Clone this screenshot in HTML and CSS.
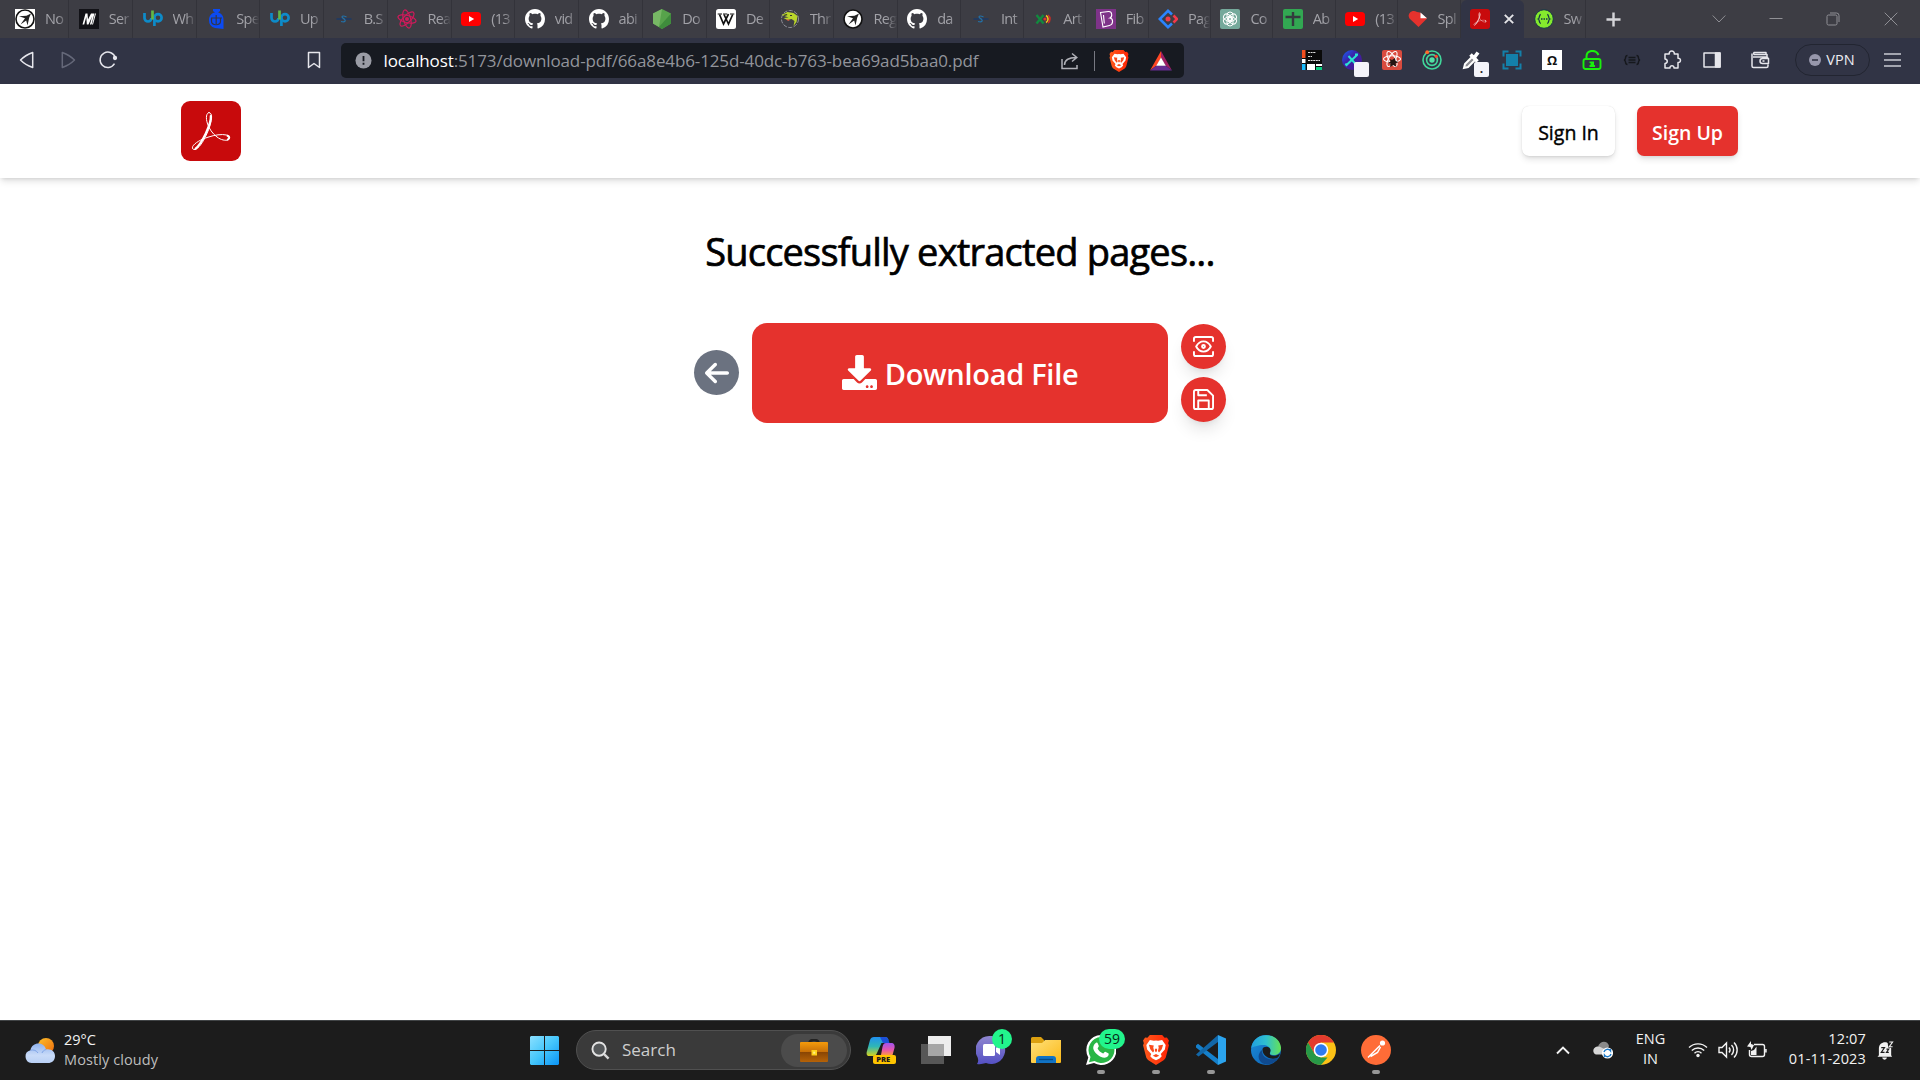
FILE: index.html
```
<!DOCTYPE html>
<html lang="en">
<head>
<meta charset="utf-8">
<title>Download File</title>
<link rel="stylesheet" href="styles.css">
</head>
<body>
<svg class="sprite" aria-hidden="true">
  <defs>
    <linearGradient id="g-win" x1="0" y1="0" x2="1" y2="1"><stop offset="0" stop-color="#8be0ff"/><stop offset=".5" stop-color="#45c6fb"/><stop offset="1" stop-color="#0a93f5"/></linearGradient>
    <linearGradient id="g-sun" x1="0" y1="0" x2="1" y2="1"><stop offset="0" stop-color="#fcc02a"/><stop offset="1" stop-color="#ee6a0c"/></linearGradient>
    <linearGradient id="g-cloud" x1="0" y1="0" x2="0" y2="1"><stop offset="0" stop-color="#8fb2ee"/><stop offset=".6" stop-color="#c9dbf8"/><stop offset="1" stop-color="#b9d0f5"/></linearGradient>
    <linearGradient id="g-case" x1="0" y1="0" x2="0" y2="1"><stop offset="0" stop-color="#f59b0b"/><stop offset=".5" stop-color="#c87008"/><stop offset=".52" stop-color="#8a4604"/><stop offset="1" stop-color="#b56207"/></linearGradient>
    <linearGradient id="g-cop1" x1="0" y1="0" x2="0" y2="1"><stop offset="0" stop-color="#2090f0"/><stop offset=".5" stop-color="#2fb7b5"/><stop offset="1" stop-color="#d7d31b"/></linearGradient>
    <linearGradient id="g-cop2" x1="0" y1="0" x2="0" y2="1"><stop offset="0" stop-color="#a052f0"/><stop offset=".6" stop-color="#e957a8"/><stop offset="1" stop-color="#fb9648"/></linearGradient>
    <linearGradient id="g-chat" x1="0" y1="0" x2="0" y2="1"><stop offset="0" stop-color="#8f86cf"/><stop offset="1" stop-color="#5450c4"/></linearGradient>
    <linearGradient id="g-folder" x1="0" y1="0" x2="1" y2="1"><stop offset="0" stop-color="#ffe07a"/><stop offset="1" stop-color="#fbb917"/></linearGradient>
    <linearGradient id="g-brave" x1="0" y1="0" x2="1" y2="0"><stop offset="0" stop-color="#ff5a1c"/><stop offset="1" stop-color="#ff2405"/></linearGradient>
    <linearGradient id="g-edge" x1="0" y1="0" x2="1" y2="0"><stop offset="0" stop-color="#219fe0"/><stop offset=".5" stop-color="#2fc0cf"/><stop offset="1" stop-color="#65e255"/></linearGradient>
    <linearGradient id="g-edge2" x1="0" y1="0" x2="1" y2="1"><stop offset="0" stop-color="#1c8fdc"/><stop offset="1" stop-color="#0b5bad"/></linearGradient>
    <linearGradient id="g-x" x1="0" y1="0" x2="1" y2="1"><stop offset="0" stop-color="#1668ff"/><stop offset=".4" stop-color="#3a22a8"/><stop offset="1" stop-color="#4b178f"/></linearGradient>
  </defs>
  <symbol id="adobe" viewBox="0 0 60 60">
    <rect width="60" height="60" rx="9" fill="#c80a0c"/>
    <g fill="none" stroke="#fff" stroke-linecap="round" stroke-linejoin="round">
      <path stroke-width="1" d="M28 11.6c-2.6 0-3.6 5.200-1.400 11.400 1.600 4.600 4.600 9.400 9.400 13 4 3 8.500 3.900 11 2.900 2.400-1 2.200-4.100-1.500-4.900-5-1.100-11.500-.1-18.500 2.200-7 2.200-13.500 5.800-15.300 9.300-.9 2 .4 3.400 2.300 3 3.500-.8 8-7.200 11.300-14.500 3.500-7.500 5.200-13.500 5.300-18 0-2.700-1-4.400-2.600-4.400z"/>
      <path stroke-width="2.200" d="M29.800 15c.4 4-2.300 11.600-5 17.400-3 6.200-6.400 12.300-10.200 15.200"/>
      <path stroke-width="2" d="M46.500 34.800c2.200.9 2.200 2.600.4 3.600"/>
    </g>
  </symbol>
  <symbol id="github" viewBox="0 0 16 16"><path fill="#fff" d="M8 0C3.580 0 0 3.580 0 8c0 3.540 2.290 6.530 5.470 7.590.4.070.55-.17.55-.38 0-.19-.01-.82-.01-1.490-2.010.37-2.530-.49-2.690-.94-.09-.23-.48-.94-.82-1.130-.28-.15-.68-.52-.01-.53.630-.01 1.080.58 1.230.82.720 1.210 1.870.87 2.330.66.070-.52.280-.87.510-1.070-1.780-.2-3.640-.89-3.640-3.950 0-.87.310-1.590.82-2.150-.08-.2-.36-1.020.08-2.120 0 0 .67-.21 2.200.82.640-.18 1.320-.27 2-.27s1.360.09 2 .27c1.530-1.040 2.200-.82 2.200-.82.440 1.100.160 1.920.080 2.120.510.560.820 1.270.820 2.150 0 3.070-1.870 3.750-3.650 3.950.290.250.540.730.540 1.480 0 1.070-.01 1.930-.01 2.200 0 .21.150.46.550.38A8.010 8.010 0 0 0 16 8c0-4.420-3.580-8-8-8z"/></symbol>
  <symbol id="youtube" viewBox="0 0 20 20"><rect y="3" width="20" height="14" rx="3.500" fill="#f00"/><path fill="#fff" d="M8 7l5.200 3L8 13z"/></symbol>
  <symbol id="upwork" viewBox="0 0 20 20"><g fill="none" stroke-width="2.700"><path stroke="#0d8bc9" d="M1.500 4v5a3.500 3.500 0 0 0 7 0"/><circle cx="15" cy="8.800" r="3.600" stroke="#0d8bc9"/><path stroke="#0d8bc9" d="M11.400 10v7"/><path stroke="#63b846" d="M9.500 1.500v9"/></g></symbol>
  <symbol id="wing" viewBox="0 0 20 20"><circle cx="10" cy="10" r="9" fill="#fff" stroke="#111" stroke-width="1.600"/><path fill="#222" d="M4 7.200l7.500-.4L16 4.500l-1.800 4.200-1.700 7.800-1.300-5-5.700 4 4.500-6.300z"/></symbol>
  <symbol id="dna" viewBox="0 0 20 20"><path d="M2.500 10h6M11 10h6.500" stroke="#233a5e" stroke-width="1.800"/><path d="M12.500 8c-4-2-6-.5-3 1.500s2 4-2.500 3" fill="none" stroke="#2371a8" stroke-width="1.200"/></symbol>
  <symbol id="brave" viewBox="0 0 20 22"><path fill="url(#g-brave)" d="M5.500 0h9l1.800 2 1.700-.2L19.500 4l-.6 2 .6 1.500-2.200 8.500c-.3 1.200-1 2-2 2.700L10 22l-5.300-3.300c-1-.7-1.700-1.500-2-2.700L.5 7.500 1.100 6 .5 4 2 1.800l1.700.2z"/><path fill="#fff" d="M5.500 3.700l3 .6L10 4l1.500.3 3-.6 2.600 3.600-.6 3.300-3 3.400.7 1.500-1.600 1.800L10 18.500l-2.600-1.200-1.600-1.800.7-1.500-3-3.400-.6-3.300z"/><path fill="#fb4a1b" d="M4.800 7.200l3.600.5-.4 1.400.6 2.700-.8 1-2-2.300zM15.200 7.200l-3.600.5.4 1.400-.6 2.700.8 1 2-2.300zM7.600 15.200L10 14l2.400 1.200L10 16.300zM9.200 10h1.600v1.800L10 12.600l-.8-.8z"/></symbol>
</svg>

<div class="screen">
  <div class="tabs">
    <div class="tab"><svg class="fav" viewBox="0 0 20 20"><path fill="#fff" d="M0 0h20v20H0z"/><use href="#wing"/></svg><span class="label">No</span></div>
    <div class="tab"><svg class="fav" viewBox="0 0 20 20"><path fill="#121217" d="M0 0h20v20H0z"/><path fill="#fff" d="M3.500 15.500l3-11h2l.5 6 3-6h3.500l-3 11h-1.600l2.200-8-3.600 8H7.800L7.300 8l-2.100 7.500z"/><path fill="#fff" d="M16 4.500h1l-3 11h-1z"/></svg><span class="label">Ser</span></div>
    <div class="tab"><svg class="fav"><use href="#upwork"/></svg><span class="label">Wh</span></div>
    <div class="tab"><svg class="fav" viewBox="0 0 20 20"><path fill="#0b4af2" d="M7 0h7v2l-2 1.500c3 .5 5.500 3 5.500 7V20L9 19a8 8 0 0 1-6-8c0-4 2.500-7 6-7.500L7 2z"/><path d="M5 9h11M5.500 9v3c0 5 9 5 9 0V9M10.200 6v9" fill="none" stroke="#32364a" stroke-width="1.200"/></svg><span class="label">Spe</span></div>
    <div class="tab"><svg class="fav"><use href="#upwork"/></svg><span class="label">Up</span></div>
    <div class="tab"><svg class="fav"><use href="#dna"/></svg><span class="label">B.S</span></div>
    <div class="tab"><svg class="fav" viewBox="0 0 20 20"><g fill="none" stroke="#d11a5b" stroke-width="1.200"><ellipse cx="10" cy="10" rx="9.300" ry="3.600" transform="rotate(15 10 10)"/><ellipse cx="10" cy="10" rx="9.300" ry="3.600" transform="rotate(75 10 10)"/><ellipse cx="10" cy="10" rx="9.300" ry="3.600" transform="rotate(135 10 10)"/></g><circle cx="10" cy="10" r="2" fill="#d11a5b"/></svg><span class="label">Rea</span></div>
    <div class="tab"><svg class="fav"><use href="#youtube"/></svg><span class="label">(13</span></div>
    <div class="tab"><svg class="fav"><use href="#github"/></svg><span class="label">vid</span></div>
    <div class="tab"><svg class="fav"><use href="#github"/></svg><span class="label">abi</span></div>
    <div class="tab"><svg class="fav" viewBox="0 0 20 20"><path fill="#57a34b" d="M10 0l9 4.500v10L10 20l-9-5.500v-10z"/><path fill="#77b865" d="M10 0L1 4.500v10L7 18z"/><path fill="#3f8c3c" d="M19 4.500L7 18l3 2 9-5.500z"/></svg><span class="label">Do</span></div>
    <div class="tab"><svg class="fav" viewBox="0 0 20 20"><rect width="20" height="20" rx="2.500" fill="#fff"/><path fill="none" stroke="#111" stroke-width="1.700" d="M3.500 5.500l4 9.500 5-10M8 5.500l4.500 9.500 4.200-9.500"/><path stroke="#111" d="M1.700 5H6M7 5h4M14 5h4.300"/></svg><span class="label">De</span></div>
    <div class="tab"><svg class="fav" viewBox="0 0 20 20"><circle cx="10" cy="10" r="8.500" fill="none" stroke="#909099" stroke-width="1" stroke-dasharray="4 1.500"/><path fill="#b9d42b" d="M1.500 6l6-3 6 1 4 3-1 6-3 4 1-5-3-2-4 1-4-2 5-.500z"/><path fill="#333" d="M3.500 6l3-1 1 1-3 1zM10 6h2v1h-2z"/><path fill="#e65b3d" d="M6 10l4 1-2 1z"/></svg><span class="label">Thr</span></div>
    <div class="tab"><svg class="fav"><use href="#wing"/></svg><span class="label">Reg</span></div>
    <div class="tab"><svg class="fav"><use href="#github"/></svg><span class="label">da</span></div>
    <div class="tab late"><svg class="fav"><use href="#dna"/></svg><span class="label">Int</span></div>
    <div class="tab late"><svg class="fav" viewBox="0 0 20 20"><path d="M3.500 6l7 8.500M10.500 6l-7 8.500" stroke="#128a3e" stroke-width="2.400"/><circle cx="12" cy="10" r="1.600" fill="#e3322c"/><path d="M13 6.500a4 4 0 0 1 0 7" fill="none" stroke="#f0c21d" stroke-width="1.600"/><path d="M15 6a5 5 0 0 1 0 8" fill="none" stroke="#d42a24" stroke-width="1.500"/></svg><span class="label">Art</span></div>
    <div class="tab late"><svg class="fav" viewBox="0 0 20 20"><path fill="#7e3389" d="M0 0h20v20H0z"/><path d="M4.500 3.500l8-1c4-.3 4 5.500 1.500 6.500 3.500.5 3.500 6.500-.5 7.500l-6.500 1.500zM7.500 6l.8 8.500" fill="none" stroke="#fff" stroke-width="1.100"/></svg><span class="label">Fib</span></div>
    <div class="tab late"><svg class="fav" viewBox="0 0 20 20"><g fill="none" stroke-width="2.600"><path stroke="#2a84ff" d="M14 5.500L10 1.800 1.800 10l8.200 8.200 4-3.700"/><path stroke="#f3394b" d="M15.500 6.500L19 10l-3.500 3.500"/></g><circle cx="10" cy="10" r="2.500" fill="#f3394b"/></svg><span class="label">Pag</span></div>
    <div class="tab late"><svg class="fav" viewBox="0 0 20 20"><rect width="20" height="20" rx="2" fill="#75a99b"/><g fill="none" stroke="#fff" stroke-width="1"><rect x="7" y="3" width="6" height="8.500" rx="3"/><rect x="7" y="3" width="6" height="8.500" rx="3" transform="rotate(60 10 10)"/><rect x="7" y="3" width="6" height="8.500" rx="3" transform="rotate(120 10 10)"/><rect x="7" y="3" width="6" height="8.500" rx="3" transform="rotate(180 10 10)"/><rect x="7" y="3" width="6" height="8.500" rx="3" transform="rotate(240 10 10)"/><rect x="7" y="3" width="6" height="8.500" rx="3" transform="rotate(300 10 10)"/></g></svg><span class="label">Co</span></div>
    <div class="tab late"><svg class="fav" viewBox="0 0 20 20"><rect width="20" height="20" rx="2" fill="#32a852"/><path d="M2.500 8h15M10 3v14" stroke="#343b3e" stroke-width="2.400"/></svg><span class="label">Ab</span></div>
    <div class="tab late"><svg class="fav"><use href="#youtube"/></svg><span class="label">(13</span></div>
    <div class="tab late"><svg class="fav" viewBox="0 0 20 20"><path fill="#e5322d" d="M10.500 18L1.500 9.500C-1.500 5 4-.5 9 3l3 .5 7 6z"/><path fill="#fff" d="M12.500 3.500L19 9.300h-6.500z"/></svg><span class="label">Spl</span></div>
    <div class="tab active"><svg class="fav"><use href="#adobe"/></svg><svg class="close" viewBox="0 0 10 10"><path d="M.8.8l8.400 8.400M9.200.8L.8 9.200" stroke="#e4e4e8" stroke-width="1.900"/></svg></div>
    <div class="tab last"><svg class="fav" viewBox="0 0 20 20"><circle cx="10" cy="10" r="9.300" fill="#85ea2d" stroke="#173647" stroke-width="1"/><path d="M6.800 5.500c-2 0-1 4-2.500 4.500 1.500.5.500 4.500 2.500 4.500M13.200 5.500c2 0 1 4 2.500 4.500-1.500.5-.5 4.500-2.500 4.500" fill="none" stroke="#173647" stroke-width="1.300"/><path d="M7 10h6.500" stroke="#173647" stroke-width="1.400" stroke-dasharray="1.500 1"/></svg><span class="label">Sw</span></div>
    <svg class="plus" viewBox="0 0 16 16"><path d="M8 .5v15M.5 8h15" stroke="#d4d4d8" stroke-width="2.600"/></svg>
    <div class="win-controls">
      <svg viewBox="0 0 14 14"><path d="M.7 3.500L7 10l6.300-6.500"/></svg>
      <svg viewBox="0 0 14 14"><path d="M.5 6.500h13"/></svg>
      <svg viewBox="0 0 14 14"><rect x="1" y="3" width="10" height="10" rx="1.500"/><path d="M4 1h6.500A2.500 2.500 0 0 1 13 3.500V10"/></svg>
      <svg viewBox="0 0 14 14"><path d="M.7.7l12.600 12.600M13.300.7L.7 13.300"/></svg>
    </div>
  </div>

  <div class="toolbar">
    <div class="nav-icons">
      <svg viewBox="0 0 20 20"><path d="M14.700 2.500v15c-5.500-2-8.300-3.500-12.200-7.500 3.900-4 6.700-5.500 12.200-7.500z"/></svg>
      <svg class="dim" viewBox="0 0 20 20"><path d="M4.300 2.500v15c5.500-2 8.300-3.500 12.200-7.500-3.900-4-6.700-5.500-12.200-7.500z"/></svg>
      <svg viewBox="0 0 20 20"><path d="M16.500 13.700A7.700 7.700 0 1 1 17.300 8"/><circle cx="17" cy="8" r="1.400" fill="#e6e6ec"/></svg>
    </div>
    <svg class="bookmark" viewBox="0 0 14 18"><path d="M1.500 1.500h11v15L7 12.500l-5.500 4z"/></svg>
    <div class="urlbar">
      <svg class="info" viewBox="0 0 18 18"><circle cx="9" cy="9" r="8.500" fill="#9a9ca5"/><path d="M9 4.200v5.600M9 11.400v2" stroke="#171a21" stroke-width="1.900"/></svg>
      <span class="url"><b>localhost</b>:5173/download-pdf/66a8e4b6-125d-40dc-b763-bea69ad5baa0.pdf</span>
      <svg class="share" viewBox="0 0 18 18"><path d="M1 7v9.500h15V13M3.500 13c0-5 3-7.500 12-7.500M11 1.500l4.800 4-4.800 4"/></svg>
      <i class="divider"></i>
      <svg class="shield"><use href="#brave"/></svg>
      <svg class="bat" viewBox="0 0 22 20"><path fill="#ff4724" d="M11 0v7l-4.500 7.500L0 19.500z"/><path fill="#9e1f63" d="M11 0v7l4.500 7.500 6.500 5z"/><path fill="#662d91" d="M0 19.500l6.500-5h9l6.500 5z"/><path fill="#fff" d="M11 6.500l4.800 8.300H6.200z"/></svg>
    </div>
    <div class="extensions">
      <svg viewBox="0 0 20 20"><path fill="#0a0a0a" d="M0 0h20v20H0z"/><path fill="#f24e1e" d="M0 0h3.500v8H0z"/><path fill="#fff" d="M0 9h3.500v4H0zM5 14h8v6H5z"/><path fill="#1abcfe" d="M0 14h3.500v6H0z"/><path fill="#fff" d="M14 14h6v2h-6z"/><path fill="#0acf83" d="M14 17h6v3h-6z"/><path stroke="#ddd" stroke-width="1.200" stroke-dasharray="2 .6" d="M6 2.500h8M6 6.500h4M6 10.500h12"/></svg>
      <div class="ext-badge"><svg viewBox="0 0 20 20"><circle cx="10" cy="10" r="10" fill="url(#g-x)"/><path d="M4 15.500L15.500 4.500M6.500 6l7 8M13 4.500h3M3.500 13.500l1.500 2.500" fill="none" stroke="#2ce2d2" stroke-width="2"/></svg><i></i></div>
      <svg viewBox="0 0 20 20"><rect width="20" height="20" rx="2" fill="#d94b3e"/><g fill="none" stroke="#fff" stroke-width="1.100"><ellipse cx="10" cy="9" rx="8.500" ry="3.300"/><ellipse cx="10" cy="9" rx="8.500" ry="3.300" transform="rotate(60 10 9)"/><ellipse cx="10" cy="9" rx="8.500" ry="3.300" transform="rotate(120 10 9)"/></g><path fill="#251512" d="M8 9l2 1 3-2 .5 3 3 1-3 1.500 1 3.500-3-2-3.500 2 .5-3.500L6 13l2.500-1.500z"/></svg>
      <svg viewBox="0 0 20 20"><g fill="none" stroke="#41d69b" stroke-width="1.600"><circle cx="10" cy="10" r="9"/><circle cx="10" cy="10" r="5.400"/></g><circle cx="10" cy="10" r="2.700" fill="#52e0a4"/><circle cx="5.200" cy="2.200" r="1.900" fill="#ff6a2b"/><circle cx="14.200" cy="6.300" r="1.600" fill="#ff4a2b"/></svg>
      <div class="ext-badge"><svg viewBox="0 0 20 20"><path d="M2 18l1-4 7.500-7.500 3 3L6 17z" fill="#8c8c92" stroke="#fff" stroke-width="2"/><path d="M8.500 4.500l7 7M12 8l4-5.500" stroke="#fff" stroke-width="3.600"/></svg><i>.</i></div>
      <svg viewBox="0 0 20 20"><path fill="#1480aa" d="M4 4h12v12H4z"/><path d="M1.500 6.500v-5h5M13.500 1.500h5v5M18.500 13.500v5h-5M6.500 18.500h-5v-5" fill="none" stroke="#1480aa" stroke-width="2"/></svg>
      <div class="omega">Ω</div>
      <svg viewBox="0 0 20 20"><rect x="1.500" y="9" width="17" height="10" rx="2" fill="none" stroke="#1bef0c" stroke-width="1.900"/><path d="M4.500 9V6.500C4.500-.5 14-.8 16.500 5" fill="none" stroke="#1bef0c" stroke-width="2"/><path fill="#1bef0c" d="M7.500 11.500h4.500V15h1v2H7.500v-2h1v-2h-1z"/></svg>
      <svg viewBox="0 0 20 20"><path d="M5.500 5.500C2 5.500 5 9.500 2 10c3 .5 0 4.500 3.500 4.500M14.500 5.500c3.500 0 .5 4 3.500 4.500-3 .5 0 4.500-3.500 4.500M6.500 7.500h7M6.500 10h7M6.500 12.500h7" fill="none" stroke="#16181d" stroke-width="1.500"/></svg>
      <svg viewBox="0 0 20 20" class="line"><path d="M3 4h4.200c-.5-4 5.600-4 5.100 0H16v4.200c3.300-.3 3.300 4.600 0 4.300V18H12c.3-3-4.300-3-4 0H3v-4.500c3-.2 3-4.200 0-4.500z"/></svg>
      <svg viewBox="0 0 20 20" class="line"><rect x="2" y="3" width="16" height="14"/><path fill="#e6e6ec" d="M13.500 3H18v14h-4.500z"/></svg>
    </div>
    <svg class="wallet" viewBox="0 0 20 20"><path d="M17 7V4.500H4A1.700 1.700 0 0 1 4 2.500h12v2M2 3.500V16a1.500 1.500 0 0 0 1.500 1.500h13a1.500 1.500 0 0 0 1.500-1.500v-1.500M3 7h13.500A1.500 1.500 0 0 1 18 8.500M18.500 8.500v5h-6a2.500 2.500 0 0 1 0-5zM12.500 11h2"/></svg>
    <div class="vpn"><svg viewBox="0 0 12 12"><circle cx="6" cy="6" r="6" fill="#9797ab"/><path d="M3 6h6" stroke="#313445" stroke-width="1.600"/></svg><span>VPN</span></div>
    <svg class="menu" viewBox="0 0 17 14"><path d="M0 1h17M0 7h17M0 13h17" stroke="#c9cad2" stroke-width="1.500"/></svg>
  </div>

  <main class="page">
    <header class="site-header">
      <svg class="logo"><use href="#adobe"/></svg>
      <div class="auth">
        <button class="btn sign-in"><span>Sign In</span></button>
        <button class="btn sign-up"><span>Sign Up</span></button>
      </div>
    </header>
    <h1 class="title">Successfully extracted pages...</h1>
    <div class="actions">
      <button class="round back"><svg viewBox="0 0 448 512"><path fill="#fff" d="M9.400 233.400c-12.500 12.500-12.500 32.800 0 45.300l160 160c12.500 12.500 32.800 12.500 45.300 0s12.500-32.800 0-45.300L109.200 288H416c17.700 0 32-14.300 32-32s-14.300-32-32-32H109.300l105.300-105.400c12.500-12.500 12.500-32.800 0-45.300s-32.800-12.500-45.300 0z"/></svg></button>
      <button class="download"><svg viewBox="0 0 512 512"><path fill="#fff" d="M216 0h80c13.300 0 24 10.700 24 24v168h87.700c17.800 0 26.700 21.500 14.100 34.100L269.700 378.300c-7.500 7.500-19.800 7.500-27.300 0L90.100 226.100c-12.600-12.600-3.700-34.100 14.100-34.100H192V24c0-13.300 10.700-24 24-24zm296 376v112c0 13.300-10.700 24-24 24H24c-13.300 0-24-10.700-24-24V376c0-13.300 10.700-24 24-24h146.700l49 49c20.100 20.100 52.500 20.100 72.600 0l49-49H488c13.300 0 24 10.700 24 24zm-124 88c0-11-9-20-20-20s-20 9-20 20 9 20 20 20 20-9 20-20zm64 0c0-11-9-20-20-20s-20 9-20 20 9 20 20 20 20-9 20-20z"/></svg><span>Download File</span></button>
      <div class="side">
        <button class="round red"><svg viewBox="0 0 22 22"><path d="M1 6V3a2 2 0 0 1 2-2h16a2 2 0 0 1 2 2v3M1 16v3a2 2 0 0 0 2 2h16a2 2 0 0 0 2-2v-3M3.300 11c3.800-7.200 11.600-7.200 15.400 0-3.800 7.200-11.600 7.200-15.400 0z"/><circle cx="11" cy="11" r="1.500" /></svg></button>
        <button class="round red"><svg viewBox="0 0 22 22"><path d="M19 21H3a2 2 0 0 1-2-2V3a2 2 0 0 1 2-2h12l6 6v12a2 2 0 0 1-2 2zM16.500 21v-9h-11v9M5.500 1v5.500h9"/></svg></button>
      </div>
    </div>
  </main>

  <footer class="taskbar">
    <div class="weather">
      <svg viewBox="0 0 30 26"><circle cx="21" cy="8" r="8" fill="url(#g-sun)"/><path fill="url(#g-cloud)" d="M6.500 25a6.500 6.500 0 0 1-1-12.800C7 3.500 19 3.500 21 11.500c5-1 9 2 9 6.500s-3 7-7 7z"/><path fill="none" stroke="#7fa4e6" d="M5.500 12.200c3-.8 6 .3 7.500 2.800M21 11.500c-2 .5-3.500 2-4 3.500"/></svg>
      <div class="forecast"><span class="temp">29°C</span><span class="sky">Mostly cloudy</span></div>
    </div>
    <div class="apps">
      <svg class="start" viewBox="0 0 29 29"><path fill="url(#g-win)" d="M1 0h13v14H0V1zM15 0h13l1 1v13H15zM0 15h14v14H1l-1-1zM15 15h14v13l-1 1H15z"/></svg>
      <div class="search"><svg class="lens" viewBox="0 0 20 20"><circle cx="8.500" cy="8.500" r="7" fill="#55585a" stroke="#e3e3e3" stroke-width="2"/><path d="M13.500 13.500l5 5" stroke="#d8d8d8" stroke-width="2.500"/></svg><span>Search</span>
        <div class="chip"><svg viewBox="0 0 28 23"><path d="M9.500 4c0-4 9-4 9 0" fill="none" stroke="#222" stroke-width="2.500"/><rect y="3" width="28" height="20" rx="1" fill="url(#g-case)"/><path fill="#ffd21a" d="M11.500 11h5.500v5.500h-5.500z"/><path fill="#fff08a" d="M13.200 12.700h2v2h-2z"/></svg></div>
      </div>
      <div class="icons">
        <div class="app"><svg viewBox="0 0 30 30"><path fill="url(#g-cop1)" d="M8 2h11c2 0 3 1 3.500 3l-2 3h-5L11 18c-.7 2-2 3-4 3H3c-2 0-3-2-2-5L4 5c.7-2 2-3 4-3z"/><path fill="#1c4fd8" d="M14 2h5c2 0 3 1 3.500 3l1 3H17z"/><path fill="url(#g-cop2)" d="M20 8h5c3 0 4 2 3.500 5l-2 7H15l1.500-8c.5-2.500 1.500-4 3.500-4z"/><rect x="7" y="20" width="23" height="9" rx="2" fill="#ffc400"/><text x="10.300" y="27.300" class="pre">PRE</text></svg></div>
        <div class="app"><svg viewBox="0 0 30 30"><path fill="#575757" d="M0 9h23v20H0z"/><path fill="#ededed" d="M7 1h23v20H7z"/><path fill="#a6a6a6" d="M7 9h16v12H7z"/></svg></div>
        <div class="app"><svg viewBox="0 0 30 30"><path fill="url(#g-chat)" d="M15 1a14 14 0 1 1-5 27c-3 1-6 1.500-9 1 1.500-2 1.500-4 .5-7A14 14 0 0 1 15 1z"/><rect x="7" y="9" width="12" height="12" rx="1.500" fill="#fff"/><path fill="#fff" d="M20 13l4-3v10l-4-3z"/></svg><span class="badge one">1</span></div>
        <div class="app"><svg viewBox="0 0 30 30"><path fill="#dca010" d="M0 3.500A1.500 1.500 0 0 1 1.500 2H10l3 3v5H0z"/><path fill="url(#g-folder)" d="M0 8h11l3-3h16v22a1 1 0 0 1-1 1H1a1 1 0 0 1-1-1z"/><path fill="#1173c5" d="M5 28v-4a3 3 0 0 1 3-3h14a3 3 0 0 1 3 3v4z"/><path d="M8 24.500h14" stroke="#064b87" stroke-width="1.300"/></svg></div>
        <div class="app open"><svg viewBox="0 0 30 30"><path fill="#fff" d="M15 0a15 15 0 1 1-7 28L0 30l2.300-7.500A15 15 0 0 1 15 0z"/><path fill="#29b646" d="M15 2a13 13 0 1 1-6.500 24L3 27.300l1.500-5.400A13 13 0 0 1 15 2z"/><path fill="#fff" d="M10.500 7.500c.7 0 1 .2 1.300 1l1 2.600c.2.600-1.200 1.900-1.200 2.400 1 2.200 3 4 5.500 5 .6 0 1.600-1.900 2.200-1.700l3 1.500c.7.400.4 2-.2 2.800-2 2.200-4.600 1.800-7.500.6-3.600-1.600-7.100-5.600-7.400-8.700 0-2 1.300-4.700 3.300-5.500z"/></svg><span class="badge many">59</span></div>
        <div class="app open"><svg><use href="#brave"/></svg></div>
        <div class="app open"><svg viewBox="0 0 30 30"><path fill="#1580cb" d="M0 10.500l2-1.800L22 24v6L0 12.500z"/><path fill="#1267a8" d="M0 19.500L22 0v7L2.500 21.500z"/><path fill="#2ba4ee" d="M22 0l8 3.500v23L22 30z"/></svg></div>
        <div class="app"><svg viewBox="0 0 30 30"><circle cx="15" cy="15" r="15" fill="url(#g-edge2)"/><path fill="url(#g-edge)" d="M.3 13C2-4 28-4 30 12.500c.3 6-5 8.500-9.500 7.300-2.500-.7-1-2-1-4.300 0-3-3-5.500-7-5.500C7 10 2 12 .3 13z"/><path fill="#0f4a8f" d="M11 15c-.5 7 7 11.500 16 8-3.500 6-11 8-16 5-5-4-4-10 0-13z"/><path fill="#1c1c1c" d="M11.500 14c1-3 7.500-3 8 1 0 2.500-1.500 3.500 0 5 2 1.300 6 1.200 9.500-1.500-1 3-2 4-3 4.500-7 2.500-15-2-14.500-9z"/></svg></div>
        <div class="app"><svg viewBox="0 0 30 30"><circle cx="15" cy="15" r="15" fill="#fbc116"/><path fill="#e33b2e" d="M2 7.500A15 15 0 0 1 28 7.500H15L8.500 18.700z"/><path fill="#279847" d="M2 7.500l6.500 11.300L15 22.500h6.500L15 30A15 15 0 0 1 2 7.500z"/><circle cx="15" cy="15" r="7.300" fill="#fff"/><circle cx="15" cy="15" r="5.800" fill="#2f7bf0"/></svg></div>
        <div class="app open"><svg viewBox="0 0 30 30"><circle cx="15" cy="15" r="15" fill="#ff6c37"/><circle cx="21.500" cy="8" r="2.600" fill="#fff"/><path d="M19 10.500L7 22.500M19.500 12l-3 5.500-7 4" fill="none" stroke="#fff" stroke-width="1.500"/></svg></div>
      </div>
    </div>
    <div class="tray">
      <svg class="up" viewBox="0 0 14 9"><path d="M1 7.500l6-6 6 6"/></svg>
      <svg class="drive" viewBox="0 0 20 18"><path fill="#8a8a8a" d="M5 5.500C7-1 15-.5 16 5l-2 5z"/><path fill="#d6d6d6" d="M3 13.500C-1.500 12 0 5.500 5 5.500c2.500 0 5 2 8 3.500v4.500z"/><circle cx="14.500" cy="12" r="5.600" fill="#fff"/><path d="M11 11a3.700 3.700 0 0 1 6.500-1.200V8M18 13a3.700 3.700 0 0 1-6.500 1.200V16" fill="none" stroke="#1978c8" stroke-width="1.400"/></svg>
      <div class="lang"><span>ENG</span><span>IN</span></div>
      <svg class="wifi" viewBox="0 0 20 16"><path d="M1 5.500a13 13 0 0 1 18 0M3.800 8.500a9 9 0 0 1 12.400 0M6.500 11.200a5 5 0 0 1 7 0"/><circle cx="10" cy="13.500" r="1.700" fill="#f2f2f2" stroke="none"/></svg>
      <svg class="sound" viewBox="0 0 20 18"><path d="M1 6.500h3L8.500 2v14L4 11.500H1zM11 6.500a3.800 3.800 0 0 1 0 5M13.500 4a7 7 0 0 1 0 10M16 1.500a10.500 10.500 0 0 1 0 15"/></svg>
      <svg class="battery" viewBox="0 0 21 18"><path d="M7 3.500h8.500a2 2 0 0 1 2 2v8a2 2 0 0 1-2 2h-11a2 2 0 0 1-2-2V9M19 8v3.500"/><path fill="#f2f2f2" stroke="none" d="M4 0v3l3 1-2.500 5L3.500 6 0 5.500zM4 14v-4l3-1 2.500-3.500v8.500z"/></svg>
      <div class="clock"><span>12:07</span><span>01-11-2023</span></div>
      <svg class="bell" viewBox="0 0 18 20"><path fill="#f2f2f2" d="M2 15V8c0-9 13-9 13 0v7l1 1.500H.5zM5.500 17.500h5c-.5 3-4.500 3-5 0z"/><path fill="#1c1c1c" d="M11 0h7v7h-6z"/><path d="M4.500 7h3.500l-3.500 5h3.500M10 8.500h2.500l-2.500 3.500h2.500" fill="none" stroke="#1c1c1c" stroke-width="1.200"/><path d="M13 1h3.500l-3.500 5h3.500" fill="none" stroke="#f2f2f2" stroke-width="1.200"/></svg>
    </div>
  </footer>
</div>
</body>
</html>
```
FILE: styles.css
```
* { box-sizing: border-box; }
body { margin: 0; background: #fff; font-family: "Open Sans", "Noto Sans", sans-serif; }
button { border: 0; padding: 0; font-family: inherit; }
svg { display: block; flex: none; }
.sprite { position: absolute; width: 0; height: 0; }
.screen { width: 1920px; height: 1080px; display: flex; flex-direction: column; overflow: hidden; }

/* Tab strip */
.tabs { height: 38px; background: #3d3d44; display: flex; align-items: stretch; padding-left: 5.6px; }
.tab { width: 63.73px; flex: none; display: flex; align-items: center; gap: 10px; padding-left: 9.5px; border-right: 1px solid #33333a; }
.tab.late { width: 62.4px; }
.tab.active { width: 63.500px; background: #313445; border: 0; border-radius: 6px 6px 0 0; gap: 14px; }
.tab.last { width: 61.6px; }
.fav { width: 20px; height: 20px; }
.close { width: 10px; height: 10px; }
.label { flex: 1; overflow: hidden; white-space: nowrap; font-size: 14.500px; line-height: 20px; letter-spacing: -.7px; color: #a2a2a8; mask-image: linear-gradient(90deg, #000 55%, transparent 100%); }
.plus { width: 15px; height: 15px; align-self: center; margin-left: 20px; }
.win-controls { margin-left: auto; display: flex; align-items: center; gap: 43.2px; padding-right: 22.500px; }
.win-controls svg { width: 14px; height: 14px; fill: none; stroke: #909095; stroke-width: 1; }

/* Address row */
.toolbar { height: 46px; background: #313445; display: flex; align-items: center; padding-bottom: 2px; }
.nav-icons { display: flex; gap: 20px; margin-left: 17.500px; }
.nav-icons svg, .bookmark, .wallet, .line { fill: none; stroke: #e6e6ec; stroke-width: 1.5; stroke-linejoin: round; }
.nav-icons svg { width: 20px; height: 20px; }
.nav-icons .dim { stroke: #656879; }
.bookmark { width: 14px; height: 18px; margin-left: 189px; }
.urlbar { width: 843px; height: 35px; margin: 1px 0 0 20.500px; background: #171a21; border-radius: 5px; display: flex; align-items: center; padding: 0 12px 0 14px; }
.info { width: 17px; height: 17px; }
.url { flex: 1; margin-left: 11.500px; padding-bottom: 1px; font-size: 17px; letter-spacing: -.12px; color: #92949b; white-space: nowrap; }
.url b { font-weight: 400; color: #fff; }
.share { width: 18px; height: 18px; fill: none; stroke: #b0b1b8; stroke-width: 1.5; }
.divider { width: 1px; height: 20px; margin: 0 14px 0 15px; background: #777982; }
.shield { width: 20px; height: 22px; }
.bat { width: 22px; height: 20px; margin-left: 21px; }
.extensions { display: flex; gap: 20px; margin-left: 118px; }
.extensions svg { width: 20px; height: 20px; }
.ext-badge { position: relative; width: 20px; height: 20px; }
.ext-badge i { position: absolute; left: 12px; top: 12px; width: 15px; height: 15px; border-radius: 2px; background: #f4f4fa; font: 700 12px/13px "Open Sans", sans-serif; color: #222; text-align: center; }
.omega { width: 20px; height: 20px; background: #fff; color: #111; font: 700 13px/20px "Open Sans", sans-serif; text-align: center; }
.wallet { width: 20px; height: 20px; margin-left: 28px; }
.vpn { width: 75px; height: 32px; margin-left: 24.500px; border: 1px solid #222531; border-radius: 16px; display: flex; align-items: center; justify-content: center; gap: 5px; font-size: 14.5px; color: #ececf2; }
.vpn svg { width: 12px; height: 12px; }
.vpn span { padding-bottom: 2px; }
.menu { width: 17px; height: 14px; margin-left: 14.500px; }

/* Page */
.page { flex: 1; }
.site-header { height: 94px; padding: 0 182px 0 181px; display: flex; align-items: center; justify-content: space-between; box-shadow: 0 4px 7px -1px rgba(0,0,0,.13), 0 2px 4px -2px rgba(0,0,0,.13); }
.logo { width: 60px; height: 60px; }
.auth { display: flex; gap: 22px; }
.btn { height: 50px; padding-top: 2px; border-radius: 7px; font-size: 19.500px; box-shadow: 0 4px 7px -1px rgba(0,0,0,.12), 0 2px 4px -2px rgba(0,0,0,.12); }
.sign-in { width: 93px; background: #fff; letter-spacing: 0; color: #000; -webkit-text-stroke: .4px #000; box-shadow: 0 0 1px rgba(0,0,0,.16), 0 4px 7px -1px rgba(0,0,0,.12), 0 2px 4px -2px rgba(0,0,0,.12); }
.sign-up { width: 101px; background: #e5322d; color: #fff; font-weight: 600; letter-spacing: 0; }
.title { margin: 45px 0 0; height: 56px; text-align: center; font-size: 38px; line-height: 56px; font-weight: 400; letter-spacing: -.8px; color: #000; -webkit-text-stroke: .7px #000; }
.actions { margin-top: 44px; display: flex; justify-content: center; align-items: center; gap: 13px; }
.round { width: 45px; height: 45px; border-radius: 50%; display: grid; place-items: center; }
.back { background: #6b7280; margin-bottom: 1px; }
.back svg { width: 24px; height: 28px; }
.download { width: 416px; height: 100px; border-radius: 15px; background: #e5322d; color: #fff; display: flex; align-items: center; justify-content: center; gap: 8px; font-size: 29px; font-weight: 600; letter-spacing: -.3px; }
.download svg { width: 35px; height: 35px; margin-bottom: 1px; }
.side { display: flex; flex-direction: column; gap: 8px; }
.red { background: #e5322d; box-shadow: 0 11px 16px -3px rgba(0,0,0,.1), 0 4px 7px -4px rgba(0,0,0,.1); }
.red svg { width: 21px; height: 21px; fill: none; stroke: #fff; stroke-width: 2; stroke-linejoin: round; }

/* Taskbar */
.taskbar { height: 60px; background: #1c1c1c; border-top: 1px solid #414446; display: flex; color: #f2f2f2; font-size: 14.5px; line-height: 20px; }
.weather { width: 530px; display: flex; align-items: center; padding-left: 25px; gap: 9px; }
.weather svg { width: 30px; height: 26px; }
.forecast, .lang, .clock { display: flex; flex-direction: column; white-space: nowrap; padding-bottom: 2px; }
.sky { color: #bebebe; letter-spacing: .1px; }
.apps { display: flex; align-items: center; padding-bottom: 1px; }
.start { width: 29px; height: 29px; }
.search { width: 275px; height: 40px; margin-left: 17px; border: 1px solid #505050; border-radius: 20px; background: #3a3a3a; display: flex; align-items: center; padding: 0 3px 0 14px; font-size: 17px; color: #cecece; }
.search span { margin-left: 12px; }
.lens { width: 19px; height: 19px; }
.chip { margin-left: auto; width: 66px; height: 33px; border-radius: 17px; background: #4b4b4b; display: grid; place-items: center; }
.chip svg { width: 28px; height: 23px; }
.icons { display: flex; margin-left: 2.500px; height: 100%; }
.app { position: relative; width: 55px; display: grid; place-items: center; }
.app svg { width: 30px; height: 30px; }
.open::after { content: ""; position: absolute; left: 23.500px; bottom: 5px; width: 8px; height: 4px; border-radius: 2px; background: #969696; }
.badge { position: absolute; top: 8px; height: 20px; border-radius: 10px; background: #22f58c; color: #062b18; font-size: 14px; line-height: 20px; text-align: center; }
.one { left: 28.500px; width: 20px; }
.many { left: 25.500px; width: 26px; }
.pre { font: 800 7.500px "Open Sans", sans-serif; fill: #1c1c1c; }
.tray { flex: 1; display: flex; align-items: center; justify-content: flex-end; padding: 0 26px 1px 0; }
.tray > svg { fill: none; stroke: #f2f2f2; stroke-width: 1.4; }
.tray .drive, .tray .bell { stroke: none; }
.up { width: 14px; height: 9px; }
.tray .up { stroke-width: 1.9; }
.drive { width: 20px; height: 18px; margin-left: 23px; }
.lang { width: 75px; text-align: center; }
.wifi { width: 20px; height: 16px; }
.sound { width: 20px; height: 18px; margin-left: 10px; }
.battery { width: 21px; height: 18px; margin-left: 9px; }
.clock { width: 98px; text-align: right; letter-spacing: .15px; }
.bell { width: 17px; height: 19px; margin-left: 11px; }
```
